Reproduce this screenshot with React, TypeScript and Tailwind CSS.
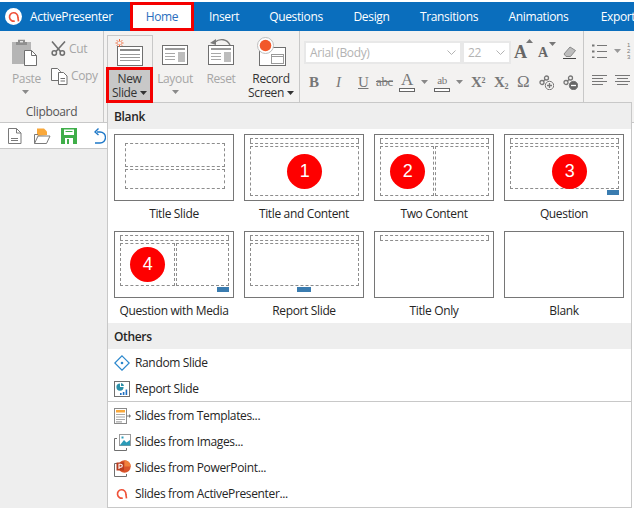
const Caret = ({ className = "" }: { className?: string }) => (
  <svg width="7" height="4" viewBox="0 0 7 4" className={`shrink-0 ${className}`}>
    <path d="M0 0h7L3.5 4z" fill="currentColor" />
  </svg>
);

const Logo = ({ size = 16 }: { size?: number }) => (
  <svg width={size} height={size} viewBox="0 0 16 16" fill="none" stroke="#ef5138" strokeWidth="2.2">
    <path d="M9 13.4A5.6 5.6 0 1 1 13.2 8.2L14 13.8" />
  </svg>
);

const SlideIcon = ({ variant }: { variant: "new" | "layout" | "reset" }) => (
  <svg width="30" height="33" viewBox="0 0 30 33">
    <rect x="2.5" y="10.5" width="25" height="19" fill="#fff" stroke="#6f6f6f" />
    {variant === "layout" ? (
      <>
        <rect x="5" y="13" width="20" height="2" fill="#9a9a9a" />
        <path d="M5 18.5h10M5 21.5h10M5 24.5h10" stroke="#a8a8a8" />
        <rect x="18" y="17" width="7" height="10" fill="#bdbdbd" />
      </>
    ) : variant === "reset" ? (
      <>
        <rect x="5" y="13" width="20" height="2" fill="#9a9a9a" />
        <path d="M5 18.5h10M5 21.5h10M5 24.5h10" stroke="#a8a8a8" />
        <rect x="18" y="17" width="7" height="10" fill="#bdbdbd" />
        <path d="M24 10C21 4 14 3 9 7" fill="none" stroke="#7a7a7a" strokeWidth="1.4" />
        <path d="M4 8l6-4v6z" fill="#7a7a7a" />
      </>
    ) : (
      <>
        <rect x="5" y="13" width="20" height="2" fill="#8a8a8a" />
        <path d="M5 18.5h20M5 21.5h20M5 24.5h20" stroke="#9a9a9a" />
        <path
          d="M4.5 3v2.5M4.5 8.5V11M.5 7H3M6 7h2.5M1.7 4.2l1.7 1.7M5.6 8.1l1.7 1.7M7.3 4.2L5.6 5.9M3.4 8.1L1.7 9.8"
          stroke="#ef5b2b"
          strokeWidth=".9"
        />
      </>
    )}
  </svg>
);

const RecordIcon = () => (
  <svg width="30" height="33" viewBox="0 0 30 33">
    <rect x="3.5" y="12.5" width="26" height="18" fill="#fff" stroke="#6f6f6f" />
    <rect x="15.5" y="19.5" width="12" height="9" fill="#fff" stroke="#9a9a9a" />
    <path d="M15.5 21.5h12" stroke="#9a9a9a" />
    <circle cx="9.5" cy="10.5" r="8" fill="#fff" stroke="#bdbdbd" />
    <circle cx="9.5" cy="10.5" r="5.8" fill="#f2582a" />
  </svg>
);

const PasteIcon = () => (
  <svg width="26" height="27" viewBox="0 0 26 27">
    <rect x="0" y="3" width="19" height="22" fill="#b5b5b5" />
    <path d="M6 3V0.7h7V3h2v3H4V3z" fill="#8f8f8f" />
    <rect x="8" y="2" width="3" height="1.4" fill="#e8e8e8" />
    <path d="M12.5 11.5h7l5 5v10h-12z" fill="#fff" stroke="#6f6f6f" />
    <path d="M19.5 11.5v5h5" fill="none" stroke="#6f6f6f" />
  </svg>
);

const ScissorsIcon = () => (
  <svg width="15" height="15" viewBox="0 0 15 15" fill="none" stroke="#6f6f6f">
    <path d="M1 .5l8.5 10M14 .5L5 10.5" strokeWidth="1.6" />
    <circle cx="3.3" cy="12" r="2.2" strokeWidth="1.5" />
    <circle cx="11.3" cy="12" r="2.2" strokeWidth="1.5" />
  </svg>
);

const CopyIcon = () => (
  <svg width="17" height="17" viewBox="0 0 17 17" fill="#fff" stroke="#6f6f6f">
    <path d="M.5.5h6l3 3v9h-9z" />
    <path d="M7.5 4.5h5l3.5 3.5v8.5H7.5z" />
    <path d="M9.5 10.5h4.5M9.5 13h4.5" />
  </svg>
);

const DocIcon = () => (
  <svg width="14" height="16" viewBox="0 0 14 16" fill="none" stroke="#7a7a7a">
    <path d="M.5.5h8l4.5 4.5v10.5H.5z" fill="#fff" />
    <path d="M8.5.5V5h4.5M3 10.5h7M3 12.5h7" />
  </svg>
);

const OpenIcon = () => (
  <svg width="17" height="16" viewBox="0 0 17 16">
    <path d="M3 8V.5h7l3 3V7z" fill="#f9a83a" />
    <path d="M.5 15.5V6.5H4M.5 15.5h12L16 8H4L.5 15.5z" fill="#fff" stroke="#7a7a7a" />
  </svg>
);

const SaveIcon = () => (
  <svg width="16" height="16" viewBox="0 0 16 16">
    <rect width="16" height="16" fill="#3fae49" />
    <rect x="3" y="1.5" width="10" height="5.5" fill="#fff" />
    <rect x="4.5" y="3" width="7" height="1" fill="#3fae49" />
    <rect x="4" y="10" width="8" height="6" fill="#fff" />
    <rect x="6" y="11" width="2" height="5" fill="#3fae49" />
  </svg>
);

const UndoIcon = () => (
  <svg width="12" height="16" viewBox="0 0 12 16" fill="none" stroke="#1e78c8" strokeWidth="1.4">
    <path d="M3 4h3a5 5 0 0 1 0 11H1" />
    <path d="M4.5 .5L1 4l3.5 3" />
  </svg>
);

const EraserIcon = () => (
  <svg width="14" height="13" viewBox="0 0 14 13">
    <path d="M1 8l6-7 5.5 3.5-5 6H3z" fill="#bdbdbd" stroke="#8a8a8a" />
    <path d="M0 12.5h13" stroke="#444" />
  </svg>
);

const LinkIcon = ({ minus }: { minus?: boolean }) => (
  <svg width="15" height="15" viewBox="0 0 15 15">
    <g fill="none" stroke="#777" strokeWidth="1.3">
      <circle cx="3" cy="7.5" r="2" />
      <circle cx="7.5" cy="3" r="2" />
      <path d="M4.5 6l1.5-1.5" />
    </g>
    <circle cx="10.5" cy="10.5" r="4.2" fill={minus ? "#666" : "#f3f2f1"} stroke="#777" />
    <path d={minus ? "M8 10.5h5" : "M8 10.5h5M10.5 8v5"} stroke={minus ? "#fff" : "#777"} strokeWidth="1.3" />
  </svg>
);

const ListLines = ({ center }: { center?: boolean }) => (
  <svg width="15" height="12" viewBox="0 0 15 12" stroke="#777">
    <path d="M0 .5h15" />
    <path d={center ? "M2 3.5h11" : "M0 3.5h11"} />
    <path d="M0 6.5h15" />
    <path d={center ? "M2 9.5h11" : "M0 9.5h11"} />
  </svg>
);

const Bullets = () => (
  <svg width="15" height="14" viewBox="0 0 15 14" stroke="#777">
    <path d="M5 1.5h10M5 7.5h10M5 13.5h10" />
    <path d="M0 1.5h2.5M0 7.5h2.5M0 13.5h2.5" strokeWidth="2" />
  </svg>
);

const RandomIcon = () => (
  <svg width="16" height="16" viewBox="0 0 16 16" fill="none">
    <path d="M8 .8L15.2 8 8 15.2.8 8z" stroke="#2a87cc" strokeWidth="1.2" />
    <circle cx="8" cy="8" r="1.3" fill="#2a87cc" />
  </svg>
);

const ReportIcon = () => (
  <svg width="16" height="16" viewBox="0 0 16 16">
    <rect x=".5" y=".5" width="15" height="15" fill="#fff" stroke="#6f6f6f" />
    <path d="M6 2.5a3.6 3.6 0 1 0 3.6 3.6H6z" fill="#2b8fa8" />
    <path d="M7 2a3.4 3.4 0 0 1 3 3H7z" fill="#2b8fa8" />
    <path d="M6 12h1.6v2H6zM8.8 11h1.6v3H8.8zM11.6 8.5h1.6V14h-1.6z" fill="#1f6fc0" />
  </svg>
);

const TemplatesIcon = () => (
  <svg width="17" height="16" viewBox="0 0 17 16">
    <rect x=".5" y=".5" width="12" height="15" fill="#fff" stroke="#8a8a8a" />
    <rect x="2" y="2" width="9" height="2.5" fill="#f9a83a" />
    <path d="M2 6.5h9M2 9h9M2 11.5h9M2 13.8h6" stroke="#a8a8a8" strokeWidth="1.2" />
    <path d="M13 8h2.5" stroke="#777" />
    <path d="M15 6l2 2-2 2z" fill="#777" />
  </svg>
);

const ImagesIcon = () => (
  <svg width="17" height="17" viewBox="0 0 17 17">
    <path d="M3 4.5H.5v12h12V14" fill="none" stroke="#6f6f6f" />
    <rect x="5.5" y=".5" width="11" height="11" fill="#fff" stroke="#9a9a9a" />
    <path d="M6 11l4-5 2.5 2.5L16 6v5.5H6z" fill="#2b9bb8" />
    <path d="M7.5 2.5h2v2h-2z" fill="#2b9bb8" />
  </svg>
);

const PowerPointIcon = () => (
  <svg width="17" height="17" viewBox="0 0 17 17">
    <path d="M3 3.5H.5v13h12V14" fill="none" stroke="#6f6f6f" />
    <circle cx="10.5" cy="6.5" r="6.2" fill="#d9532a" />
    <path d="M10.5.3a6.2 6.2 0 0 1 6.2 6.2h-6.2z" fill="#f0803c" />
    <rect x="2.5" y="2.5" width="7.5" height="8" fill="#b83b1e" />
    <path d="M5 9V4.3h1.8a1.4 1.4 0 0 1 0 2.9H5" fill="none" stroke="#fff" strokeWidth="1.1" />
  </svg>
);

const BigButton = ({ icon, lines, muted, caret }: { icon: React.ReactNode; lines: React.ReactNode; muted?: boolean; caret?: boolean }) => (
  <div className={`flex flex-col items-center leading-[14px] ${muted ? "text-[#a6a6a6]" : "text-[#333]"}`}>
    <div className="h-[33px]">{icon}</div>
    <div className="mt-[4px] text-center">{lines}</div>
    {caret && <Caret className="mt-[4px] text-[#8a8a8a]" />}
  </div>
);

const Thumb = ({ label, children }: { label: string; children?: React.ReactNode }) => (
  <div className="flex w-[120px] flex-col items-center">
    <div className="relative h-[67px] w-[120px] border border-[#767676] bg-white">{children}</div>
    <div className="mt-[4px] h-[20px] whitespace-nowrap text-[#252525]">{label}</div>
  </div>
);

const Dash = ({ className }: { className: string }) => (
  <div className={`absolute border border-dashed border-[#8d8d8d] ${className}`} />
);

const Badge = ({ n, className }: { n: number; className: string }) => (
  <div className={`absolute flex h-[35px] w-[35px] items-center justify-center rounded-full bg-[#fe0000] font-['Liberation_Sans',sans-serif] text-[18px] text-white ${className}`}>
    {n}
  </div>
);

const QBtn = ({ className }: { className: string }) => (
  <div className={`absolute h-[5px] bg-[#3a7cb0] ${className}`} />
);

const MenuHeader = ({ title, className }: { title: string; className: string }) => (
  <div className={`flex items-center bg-[#eeeeee] pl-[6px] pt-[2px] font-semibold text-[#252525] ${className}`}>{title}</div>
);

const MenuItem = ({ icon, label }: { icon: React.ReactNode; label: string }) => (
  <div className="flex h-[26px] items-center pt-[2px]">
    <div className="flex w-[27px] justify-center pl-[1px]">{icon}</div>
    <span className="text-[#252525]">{label}</span>
  </div>
);

const tabs = [
  { label: "Insert", w: "w-[60px]" },
  { label: "Questions", w: "w-[84px]" },
  { label: "Design", w: "w-[67px]" },
  { label: "Transitions", w: "w-[88px]" },
  { label: "Animations", w: "w-[91px]" },
  { label: "Export", w: "w-[68px]" },
];

export default function App() {
  return (
    <div className="relative h-[511px] w-[634px] overflow-hidden bg-white font-['Open_Sans',sans-serif] text-[12px] tracking-[-0.35px]">
      {/* title bar */}
      <div className="mt-[2px] flex h-[29px] items-center bg-[#0a6ebd] text-white">
        <div className="ml-[5px] flex h-[17px] w-[17px] shrink-0 items-center justify-center rounded-full bg-white">
          <Logo size={12} />
        </div>
        <div className="ml-[8px] w-[100px] shrink-0">ActivePresenter</div>
        <div className="flex h-[29px] w-[64px] shrink-0 items-center justify-center border-[3px] border-[#f40000] bg-white text-[#2a6fbe]">Home</div>
        {tabs.map((t) => (
          <div key={t.label} className={`${t.w} shrink-0 whitespace-nowrap text-center`}>{t.label}</div>
        ))}
      </div>

      {/* ribbon */}
      <div className="flex h-[92px] border-b border-[#c8c8c8] bg-[#f3f2f1]">
        <div className="flex w-[104px] shrink-0 flex-col border-r border-[#c8c8c8] pt-[8px]">
          <div className="flex h-[64px]">
            <div className="ml-[12px] w-[39px] leading-[14px]">
              <PasteIcon />
              <div className="mt-[6px] text-[#a6a6a6]">Paste</div>
              <Caret className="ml-[10px] mt-[4px] text-[#8a8a8a]" />
            </div>
            <div className="flex flex-col">
              <div className="flex h-[18px] items-center gap-[3px] pt-[1px] text-[#a6a6a6]"><ScissorsIcon />Cut</div>
              <div className="mt-[10px] flex h-[18px] items-center gap-[3px] text-[#a6a6a6]"><CopyIcon />Copy</div>
            </div>
          </div>
          <div className="text-center text-[#555]">Clipboard</div>
        </div>

        <div className="relative flex w-[196px] shrink-0 border-r border-[#c8c8c8]">
          <div className="ml-[3px] flex w-[47px] flex-col">
            <div className="mt-[4px] h-[32px] w-[46px] border border-b-0 border-[#c8c8c8] pl-[7px]">
              <SlideIcon variant="new" />
            </div>
            <div className="relative z-10 -ml-[1px] flex h-[36px] w-[47px] flex-col items-center border-[3px] border-[#f40000] bg-[#c8c8c8] pt-[2px] leading-[14px] text-[#333]">
              <div>New</div>
              <div className="flex items-center gap-[3px]">Slide<Caret className="text-[#333]" /></div>
            </div>
          </div>
          <div className="mt-[4px] w-[42px]">
            <BigButton muted caret icon={<SlideIcon variant="layout" />} lines="Layout" />
          </div>
          <div className="ml-[5px] mt-[4px] w-[40px]">
            <BigButton muted icon={<SlideIcon variant="reset" />} lines="Reset" />
          </div>
          <div className="ml-[6px] mt-[4px] w-[48px]">
            <BigButton
              icon={<RecordIcon />}
              lines={<>Record<div className="flex items-center gap-[3px]">Screen<Caret className="text-[#333]" /></div></>}
            />
          </div>
        </div>

        <div className="w-[284px] shrink-0 border-r border-[#c8c8c8] pl-[4px] pt-[10px]">
          <div className="flex h-[23px] items-center">
            <div className="flex h-[23px] w-[158px] items-center justify-between border-2 border-[#e8e8e8] bg-white pl-[4px] pr-[4px] text-[#b3b3b3]">
              Arial (Body)
              <svg width="9" height="5" viewBox="0 0 9 5" fill="none" stroke="#b3b3b3"><path d="M.5.5l4 4 4-4" /></svg>
            </div>
            <div className="flex h-[23px] w-[49px] items-center justify-between border-2 border-[#e8e8e8] bg-white pl-[4px] pr-[4px] text-[#b3b3b3]">
              22
              <svg width="9" height="5" viewBox="0 0 9 5" fill="none" stroke="#b3b3b3"><path d="M.5.5l4 4 4-4" /></svg>
            </div>
            <div className="relative ml-[3px] w-[24px] font-['Liberation_Serif',serif] text-[18px] font-bold text-[#666]">
              A<Caret className="absolute left-[12px] top-0 rotate-180 text-[#777]" />
            </div>
            <div className="relative w-[25px] font-['Liberation_Serif',serif] text-[14px] font-bold text-[#666]">
              A<Caret className="absolute left-[11px] top-0 text-[#777]" />
            </div>
            <EraserIcon />
          </div>
          <div className="mt-[8px] flex h-[20px] items-center font-['Liberation_Serif',serif] text-[15px] text-[#777]">
            <span className="ml-[5px] w-[27px] font-bold">B</span>
            <span className="w-[22px] italic">I</span>
            <span className="w-[18px] underline">U</span>
            <span className="w-[23px] text-[13px] line-through">abc</span>
            <span className="relative flex h-[20px] w-[16px] flex-col items-center text-[17px] leading-[16px] text-[#777]">
              A<span className="h-[4px] w-[16px] border border-[#666] bg-white" />
            </span>
            <Caret className="ml-[6px] text-[#888]" />
            <span className="relative ml-[6px] flex h-[20px] w-[16px] flex-col items-center text-[11px] leading-[16px]">
              ab<span className="h-[4px] w-[16px] border border-[#666] bg-white" />
            </span>
            <Caret className="ml-[6px] text-[#888]" />
            <span className="ml-[8px] w-[23px] font-bold">X<sup className="text-[8px]">2</sup></span>
            <span className="w-[23px] font-bold">X<sub className="text-[8px]">2</sub></span>
            <span className="w-[22px] text-[17px]">Ω</span>
            <span className="w-[24px]"><LinkIcon /></span>
            <LinkIcon minus />
          </div>
        </div>

        <div className="flex-1 pl-[8px] pt-[10px]">
          <div className="flex h-[20px] items-center">
            <Bullets />
            <Caret className="ml-[7px] text-[#999]" />
            <span className="ml-[6px] whitespace-pre font-['Liberation_Sans',sans-serif] text-[6px] leading-[6px] text-[#777]">1<br />2<br />3</span>
          </div>
          <div className="mt-[14px] flex gap-[8px]"><ListLines /><ListLines center /></div>
        </div>
      </div>

      {/* body under the ribbon */}
      <div className="flex h-[385px] w-[108px] flex-col border-r border-[#c8c8c8] bg-[#eeeeee]">
        <div className="flex h-[26px] items-center border-b border-[#c8c8c8] bg-white pl-[8px]">
          <DocIcon />
          <div className="ml-[12px]"><OpenIcon /></div>
          <div className="ml-[10px]"><SaveIcon /></div>
          <div className="ml-[17px]"><UndoIcon /></div>
        </div>
      </div>

      {/* New Slide dropdown */}
      <div className="absolute left-[107px] top-[102px] h-[406px] w-[525px] border border-[#c8c8c8] bg-white">
        <MenuHeader title="Blank" className="h-[26px]" />
        <div className="ml-[6px] mt-[5px] grid w-[510px] grid-cols-4 gap-x-[10px] gap-y-[6px]">
          <Thumb label="Title Slide">
            <Dash className="left-[10px] top-[8px] h-[24px] w-[100px]" />
            <Dash className="left-[10px] top-[34px] h-[20px] w-[100px]" />
          </Thumb>
          <Thumb label="Title and Content">
            <Dash className="left-[5px] top-[3px] h-[6px] w-[109px]" />
            <Dash className="left-[5px] top-[11px] h-[50px] w-[109px]" />
            <Badge n={1} className="left-[42px] top-[19px]" />
          </Thumb>
          <Thumb label="Two Content">
            <Dash className="left-[5px] top-[3px] h-[6px] w-[109px]" />
            <Dash className="left-[5px] top-[11px] h-[50px] w-[54px]" />
            <Dash className="left-[60px] top-[11px] h-[50px] w-[54px]" />
            <Badge n={2} className="left-[15px] top-[19px]" />
          </Thumb>
          <Thumb label="Question">
            <Dash className="left-[5px] top-[3px] h-[6px] w-[109px]" />
            <Dash className="left-[5px] top-[11px] h-[43px] w-[109px]" />
            <QBtn className="left-[102px] top-[55px] w-[12px]" />
            <Badge n={3} className="left-[47px] top-[19px]" />
          </Thumb>
          <Thumb label="Question with Media">
            <Dash className="left-[5px] top-[3px] h-[6px] w-[109px]" />
            <Dash className="left-[5px] top-[11px] h-[43px] w-[55px]" />
            <Dash className="left-[61px] top-[11px] h-[43px] w-[53px]" />
            <QBtn className="left-[102px] top-[55px] w-[12px]" />
            <Badge n={4} className="left-[15px] top-[15px]" />
          </Thumb>
          <Thumb label="Report Slide">
            <Dash className="left-[5px] top-[3px] h-[6px] w-[109px]" />
            <Dash className="left-[5px] top-[11px] h-[43px] w-[109px]" />
            <QBtn className="left-[52px] top-[55px] w-[14px]" />
          </Thumb>
          <Thumb label="Title Only">
            <Dash className="left-[5px] top-[3px] h-[6px] w-[109px]" />
          </Thumb>
          <Thumb label="Blank" />
        </div>
        <MenuHeader title="Others" className="mt-[1px] h-[26px]" />
        <MenuItem icon={<RandomIcon />} label="Random Slide" />
        <MenuItem icon={<ReportIcon />} label="Report Slide" />
        <div className="border-t border-[#c8c8c8]" />
        <MenuItem icon={<TemplatesIcon />} label="Slides from Templates..." />
        <MenuItem icon={<ImagesIcon />} label="Slides from Images..." />
        <MenuItem icon={<PowerPointIcon />} label="Slides from PowerPoint..." />
        <MenuItem icon={<Logo size={12} />} label="Slides from ActivePresenter..." />
      </div>
    </div>
  );
}
